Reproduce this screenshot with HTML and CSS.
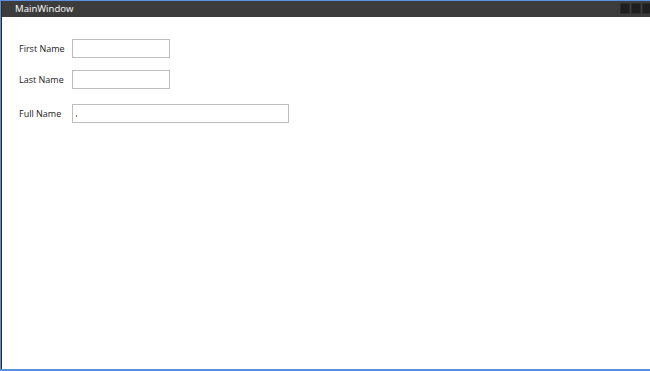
FILE: index.html
```html
<!DOCTYPE html>
<html lang="en">
<head>
  <meta charset="UTF-8" />
  <title>MainWindow</title>
  <link rel="stylesheet" href="styles.css">
</head>
<body>
  <div class="window">
    <div class="titlebar">
      <span class="title">MainWindow</span>
      <div class="buttons">
        <span class="btn"></span>
        <span class="btn"></span>
        <span class="btn"></span>
      </div>
    </div>

    <div class="content">
      <div class="row">
        <label>First Name</label>
        <input type="text" class="short" />
      </div>
      <div class="row">
        <label>Last Name</label>
        <input type="text" class="short" />
      </div>
      <div class="row full">
        <label>Full Name</label>
        <div class="output"><span class="dot"></span></div>
      </div>
    </div>
  </div>
</body>
</html>
```

FILE: styles.css
```css
* {
  margin: 0;
  padding: 0;
  box-sizing: border-box;
}
html, body {
  height: 100%;
}
body {
  background: #fff;
  font-family: 'Open Sans', 'DejaVu Sans', sans-serif;
  color: #222;
  overflow: hidden;
}
.window {
  height: 371px;
  display: flex;
  flex-direction: column;
  border-left: 1px solid #5b8fe0;
  border-top: 1px solid #5b8fe0;
  border-bottom: 2px solid #5b8fe0;
}
.titlebar {
  height: 16px;
  background: #3c3c3c;
  display: flex;
  justify-content: space-between;
  align-items: center;
  border-left: 1px solid #2a2a2a;
}
.title {
  color: #fff;
  font-size: 9.6px;
  padding-left: 13px;
  line-height: 16px;
}
.buttons {
  display: flex;
  gap: 1px;
  padding-top: 2px;
  align-self: flex-start;
  margin-right: -2px;
}
.btn {
  width: 10px;
  height: 11px;
  background: #1e1e1e;
  border: 1px solid #2c2c2c;
}
.content {
  flex: 1;
  border-left: 1px solid #2a2a2a;
  padding: 22px 0 0 17px;
}
.row {
  display: flex;
  align-items: center;
  height: 19px;
  margin-bottom: 12px;
}
.row.full {
  margin-top: 15px;
}
label {
  width: 53px;
  font-size: 9px;
}
input, .output {
  height: 19px;
  border: 1px solid #bdbdbd;
  background: #fff;
  outline: none;
}
input.short {
  width: 98px;
}
.output {
  width: 217px;
  position: relative;
}
.dot {
  position: absolute;
  left: 3px;
  top: 10px;
  width: 1px;
  height: 2px;
  background: #8a7a50;
}
```
